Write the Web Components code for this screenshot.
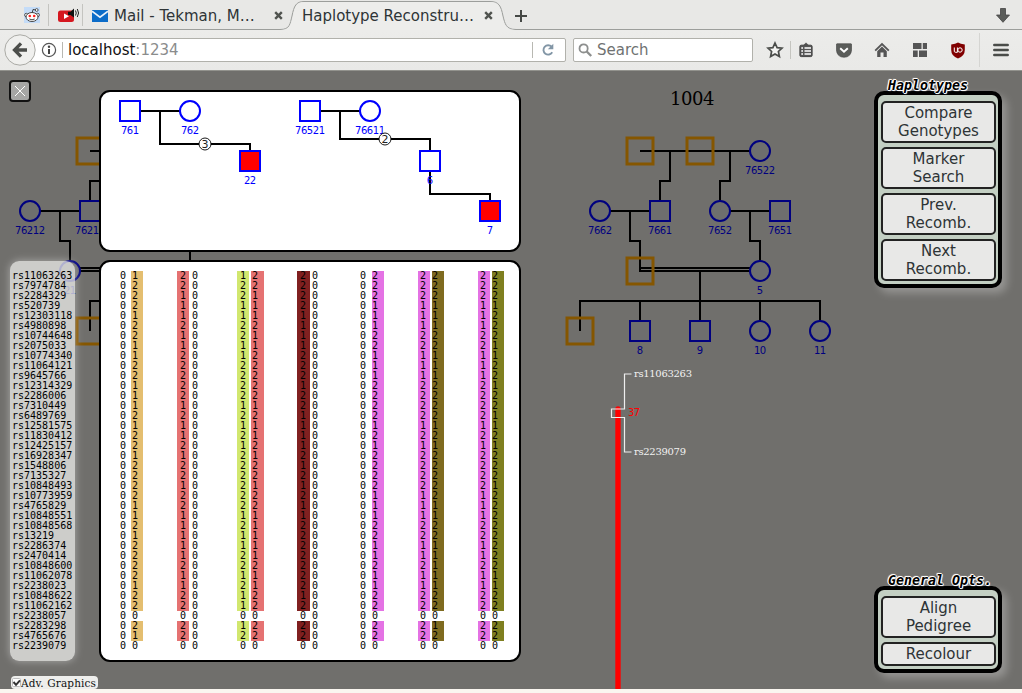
<!DOCTYPE html>
<html lang="en">
<head>
<meta charset="utf-8">
<title>Haplotype Reconstruction</title>
<style>
html,body{margin:0;padding:0}
body{width:1022px;height:693px;overflow:hidden;background:#faf6f0;font-family:"DejaVu Sans",sans-serif}
</style>
</head>
<body>
<haplo-app></haplo-app>
<script>
const define = (name, html, setup) => customElements.define(name, class extends HTMLElement {
  constructor() {
    super();
    this.attachShadow({ mode: 'open' });
  }
  connectedCallback() {
    if (this.shadowRoot.childNodes.length) return;
    this.shadowRoot.innerHTML = typeof html === 'function' ? html(this) : html;
  }
});

/* ---------- browser chrome ---------- */
define('tab-strip', `
<style>
:host{display:flex;position:relative;height:30px;background:#e8e8e6;font:15px "DejaVu Sans",sans-serif;color:#2e3436;align-items:center}
.bg{position:absolute;left:0;top:0}
.row{position:relative;display:flex;align-items:center;width:1022px;height:30px;padding-left:24px;box-sizing:border-box}
.row>*{flex:none}
.sep{width:1px;height:22px;background:#c4c4c0}
span{white-space:pre;line-height:18px;height:18px;padding-top:2px;overflow:visible}
svg{display:block}
</style>
<svg class="bg" width="1022" height="30">
<path d="M0 29.5H280C290 29.5 290 24 292 16C294 6 296 1.5 304 1.5H490C499 1.5 501 6 503 16C505 24 506 29.5 516 29.5H1022" fill="none" stroke="#9c9e9b"/>
<path d="M281 30C290 30 291 24 293 16C295 6 297 2 304 2H490C498 2 500 6 502 16C504 24 506 30 515 30Z" fill="#ededeb"/>
</svg>
<div class="row">
<svg width="16" height="16" viewBox="0 0 16 16"><rect width="16" height="16" fill="#c4dcf8"/><path d="M8 6.5L9 2.5L12 3" fill="none" stroke="#333" stroke-width=".9"/><circle cx="12.7" cy="3" r="1.4" fill="#fff" stroke="#333" stroke-width=".8"/><circle cx="2.3" cy="8" r="1.7" fill="#fff" stroke="#333" stroke-width=".8"/><circle cx="13.7" cy="8" r="1.7" fill="#fff" stroke="#333" stroke-width=".8"/><ellipse cx="8" cy="10" rx="6" ry="4.5" fill="#fff" stroke="#333" stroke-width=".9"/><circle cx="5.8" cy="9" r="1.3" fill="#f22"/><circle cx="10.2" cy="9" r="1.3" fill="#f22"/><path d="M5.3 12Q8 13.6 10.7 12" fill="none" stroke="#333" stroke-width=".9"/></svg>
<div class="sep" style="margin-left:8px"></div>
<svg width="22" height="18" viewBox="0 0 22 18" style="margin-left:9px"><rect x="0" y="4.5" width="16" height="11.5" rx="2.5" fill="#d5171f"/><path d="M6 7.5V13L11 10.2Z" fill="#fff"/><path d="M10 5.8H12.5L16 2.5V11.5L12.5 9H10Z" fill="#111"/><path d="M17.5 4.5Q19 7 17.5 9.5M19.3 3Q21.8 7 19.3 11" fill="none" stroke="#222" stroke-width="1"/></svg>
<div class="sep" style="margin-left:2px"></div>
<svg width="16" height="12" viewBox="0 0 16 12" style="margin-left:9px;margin-top:2px"><rect width="16" height="12" fill="#0b6cc8"/><path d="M0 1.2L8 7.2L16 1.2" fill="none" stroke="#e9f1fa" stroke-width="1.6"/></svg>
<span style="margin-left:6px;width:156px">Mail - Tekman, M…</span>
<svg width="9" height="9" viewBox="0 0 9 9" style="margin-left:3.5px;margin-top:1px"><path d="M1.2 1.2L7.8 7.8M7.8 1.2L1.2 7.8" stroke="#50534f" stroke-width="2.4"/></svg>
<span style="margin-left:19.5px;width:172px">Haplotype Reconstru…</span>
<svg width="9" height="9" viewBox="0 0 9 9" style="margin-left:9.5px;margin-top:1px"><path d="M1.2 1.2L7.8 7.8M7.8 1.2L1.2 7.8" stroke="#50534f" stroke-width="2.4"/></svg>
<svg width="12" height="12" viewBox="0 0 12 12" style="margin-left:22.5px;margin-top:2px"><path d="M6 0V12M0 6H12" stroke="#454845" stroke-width="2"/></svg>
<svg width="14" height="15" viewBox="0 0 14 15" style="margin-left:469px"><path d="M4.5 .5H9.5V7H13.5L7 14.3L.5 7H4.5Z" fill="#5b5d5a" stroke="#444" stroke-width=".8"/></svg>
</div>`);

define('nav-bar', `
<style>
:host{display:flex;align-items:center;height:40px;background:linear-gradient(#ececea,#e9e9e7);border-bottom:1px solid #92928d;font:15px "DejaVu Sans",sans-serif;position:relative}
:host>*{flex:none}
svg{display:block}
.field{display:flex;align-items:center;height:24px;box-sizing:border-box;border:1px solid #b1b1ab;border-radius:2px;background:#fff}
.url{width:546px;margin-left:20px;padding-left:20px}
.search{width:180px;margin-left:7px;padding-left:4px;color:#6f7272}
.back{position:absolute;left:4px;top:4px}
.sep{width:1px;background:#b8b8b2;height:16px}
.g{color:#8a8c8c}
span{line-height:18px;position:relative;top:-.5px}
</style>
<div class="field url">
<svg width="16" height="16" viewBox="0 0 16 16"><circle cx="8" cy="8" r="6.6" fill="none" stroke="#555" stroke-width="1.2"/><path d="M8 7V12" stroke="#444" stroke-width="2"/><circle cx="8" cy="4.8" r="1.2" fill="#444"/></svg>
<div class="sep" style="margin-left:5px"></div><span style="margin-left:5px;width:464px;color:#111">localhost<span class="g" style="top:0">:1234</span></span><div class="sep"></div>
<svg width="14" height="14" viewBox="0 0 14 14" style="margin-left:8px"><path d="M10.6 3.7A4.7 4.7 0 1 0 11.2 9.3" fill="none" stroke="#8296a6" stroke-width="1.9"/><path d="M12.3 .8V6.3H6.8Z" fill="#8296a6"/></svg>
</div>
<svg class="back" width="32" height="32" viewBox="0 0 32 32"><circle cx="16" cy="16" r="15.2" fill="#f0f0ee" stroke="#aaaaa5"/><path d="M17 9.3L10.5 16L17 22.7M11 16H23" fill="none" stroke="#4c4e4b" stroke-width="3.3"/></svg>
<div class="field search"><svg width="15" height="15" viewBox="0 0 15 15"><circle cx="5.6" cy="5.4" r="4.1" fill="none" stroke="#8d8f8e" stroke-width="1.8"/><path d="M8.7 8.5L13.2 13" stroke="#8d8f8e" stroke-width="2.4"/></svg><span style="margin-left:4px">Search</span></div>
<svg width="18" height="18" viewBox="0 0 18 18" style="margin-left:13px"><path d="M9 2L11.1 6.6L16 7.1L12.4 10.5L13.4 15.6L9 13L4.6 15.6L5.6 10.5L2 7.1L6.9 6.6Z" fill="#f4f4f2" stroke="#4b4d4a" stroke-width="1.7"/></svg>
<div class="sep" style="margin-left:6px;height:18px;background:#c5c5c0"></div>
<svg width="14" height="16" viewBox="0 0 14 16" style="margin-left:8px"><path d="M4 3.5L7 .5L10 3.5Z" fill="#555"/><rect x=".9" y="3.2" width="12.2" height="11.4" rx="1.3" fill="#555" stroke="#444"/><path d="M2.3 6H4M5.5 6H12M2.3 9H4M5.5 9H12M2.3 12H4M5.5 12H12" stroke="#fff" stroke-width="1.5"/></svg>
<svg width="16" height="15" viewBox="0 0 16 15" style="margin-left:23px"><path d="M1 .7H15Q15.7 .7 15.7 2V6.5Q15 14.3 8 14.3Q1 14.3 .3 6.5V2Q.3 .7 1 .7Z" fill="#5b5d5a" stroke="#444" stroke-width=".6"/><path d="M4.2 5.2L8 8.8L11.8 5.2" fill="none" stroke="#fff" stroke-width="1.9"/></svg>
<svg width="16" height="16" viewBox="0 0 16 16" style="margin-left:22px"><path d="M1.2 8.7L8 2L14.8 8.7" fill="none" stroke="#555" stroke-width="1.8"/><path d="M3.2 9.2L8 4.6L12.8 9.2V15H9.5V10.5H6.5V15H3.2Z" fill="#555"/></svg>
<svg width="14" height="14" viewBox="0 0 14 14" style="margin-left:23px"><path d="M0 0H8.5V6H0ZM9.8 0H14V6H9.8ZM0 7.4H4.7V14H0ZM6 7.4H14V14H6Z" fill="#555"/></svg>
<svg width="14" height="17" viewBox="0 0 14 17" style="margin-left:24px"><path d="M7 .5Q9.5 2.2 13.8 2.5V8Q13.8 14 7 16.5Q.2 14 .2 8V2.5Q4.5 2.2 7 .5Z" fill="#800000"/><path d="M3.3 5.5V9.3Q3.3 10.3 4.8 10.3H6.4V5.5" fill="none" stroke="#fff"/><circle cx="9" cy="8" r="2.2" fill="none" stroke="#fff"/></svg>
<div class="sep" style="margin-left:14px;height:34px;background:#d5d5d2"></div>
<svg width="16" height="14" viewBox="0 0 16 14" style="margin-left:13px"><path d="M1.3 2H14.7M1.3 7H14.7M1.3 12H14.7" stroke="#4a4c49" stroke-width="2.5" stroke-linecap="round"/></svg>
`);

/* ---------- pedigree drawing helpers ---------- */
const label = (x, y, t) => `<text x="${x}" y="${y + 23}" textLength="${t.length * 6}" text-anchor="middle">${t}</text>`;
const male = (x, y, t = '', c = '') => `<rect x="${x - 10}" y="${y - 10}" width="20" height="20" class="n ${c}"/>${t && label(x, y, t)}`;
const female = (x, y, t) => `<circle cx="${x}" cy="${y}" r="10" class="n"/>${label(x, y, t)}`;
const chosen = (x, y) => `<rect x="${x - 13}" y="${y - 13}" width="26" height="26" class="o"/>`;

define('pedigree-canvas', () => `
<style>
:host{display:block}
svg{display:block}
.n{fill:#6e6e6e;stroke:#000080;stroke-width:2}
.o{fill:none;stroke:#855600;stroke-width:3}
.l{fill:none;stroke:#000;stroke-width:2}
text{font:10px "DejaVu Sans",sans-serif;fill:#000080}
.s{font-family:"DejaVu Serif",serif;fill:#f2f2f2}
</style>
<svg width="1022" height="618" viewBox="0 71 1022 618">
<text x="670" y="105" textLength="44.5" style="font:18px 'DejaVu Serif',serif;fill:#000">1004</text>
<path class="l" d="M40 211H80M60 211V241H70V262M90 201V181H110M90 151H110M80 268H110M80 271H110M110 301H90V331M190 240V270"/>
${chosen(90, 151)}${female(30, 211, '76212')}${male(90, 211, '76211')}${female(70, 271, '21')}${chosen(90, 331)}
<path class="l" d="M640 151H750M670 151V181H660V201M730 151V181H720V201M610 211H650M630 211V241H640V272M730 211H770M750 211V241H760V261M640 268H750M640 271H750M700 271V321M580 331V301H820V321M640 301V321M760 301V321"/>
${chosen(640, 151)}${chosen(700, 151)}${female(760, 151, '76522')}
${female(600, 211, '7662')}${male(660, 211, '7661')}${female(720, 211, '7652')}${male(780, 211, '7651')}
${chosen(640, 271)}${female(760, 271, '5')}
${chosen(580, 331)}${male(640, 331, '8')}${male(700, 331, '9')}${female(760, 331, '10')}${female(820, 331, '11')}
<path d="M618 409V700" stroke="#f00" stroke-width="5.4" stroke-linecap="round"/>
<path d="M631.5 374H624.5V409H611.5V417.5H624.5V452H631.5" fill="none" stroke="#eee" stroke-width="1.2"/>
<text x="628" y="416" textLength="12" style="fill:#f00">37</text>
<text class="s" x="634" y="377" textLength="58">rs11063263</text>
<text class="s" x="634" y="455" textLength="52">rs2239079</text>
</svg>`);

define('selection-view', () => `
<style>
:host{display:block;box-sizing:border-box;width:422px;height:162px;border:2px solid #000;border-radius:11px;background:#fff;overflow:hidden}
svg{display:block}
.n{fill:#fff;stroke:#00f;stroke-width:2}
.n.a{fill:#f00}
.l{fill:none;stroke:#000;stroke-width:2}
text{font:10px "DejaVu Sans",sans-serif;fill:#00f}
.c{fill:#fff;stroke:#000;stroke-width:.9}
.k{fill:#222;font-size:11px}
</style>
<svg width="418" height="158" viewBox="101 92 418 158">
<path class="l" d="M140 111H180M160 111V144H250V151M320 111H360M340 111V139H430V151M430 171V194H490V201"/>
${male(130, 111, '761')}${female(190, 111, '762')}${male(250, 161, '22', 'a')}
${male(310, 111, '76521')}${female(370, 111, '76611')}${male(430, 161, '6')}${male(490, 211, '7', 'a')}
<circle class="c" cx="205" cy="144" r="6"/><text class="k" x="205" y="148" text-anchor="middle">3</text>
<circle class="c" cx="385" cy="139" r="6"/><text class="k" x="385" y="143" text-anchor="middle">2</text>
</svg>`);

/* ---------- haplotypes ---------- */
const Z = '0'.repeat(38);
const RED = '22111211222221211212' + '212211111211220220';
const PINK = '22211122111222212122' + '221112211211220220';
const PEOPLE = [
  [[Z], ['12221221122111212212' + '222112122221220210', '#e4be70', 0]],
  [[RED, '#e57272', 0], [Z]],
  [['12211221122221212122' + '222212112212110120', '#d1e76f', .2], [RED, '#e57272', .4]],
  [['22221111222122111121' + '212112222222120220', '#802020', .3], [Z]],
  [[Z], [PINK, '#e472e4', .6]],
  [[PINK, '#e472e4', 1], ['22211122111222212122' + '222112211111220120', '#7f6b20', 1]],
  [[PINK, '#e472e4', 1], ['22212221122122112122' + '212222222211220220', '#7f7f20', 1]]
];
define('allele-strand', el => {
  const d = +el.getAttribute('shift') || 0, base = el.hasAttribute('second') ? 1 : 3;
  return `
<style>
:host{display:block;width:12.3px}
div{height:10px;line-height:10px;padding-left:${base - d}px;white-space:pre;box-sizing:border-box}
.f{background:${el.getAttribute('color') || 'none'}}
</style>` + [...el.getAttribute('alleles')].map(a => `<div${a !== '0' ? ' class="f"' : ''}>${a}</div>`).join('');
});
define('haplotype-table', () => `
<style>
:host{display:flex;box-sizing:border-box;width:422px;height:402px;border:2px solid #000;border-radius:11px;background:#fff;padding-top:9px;padding-left:16px;font:10px "DejaVu Sans Mono",monospace;color:#000}
.p{flex:none;width:60px;display:grid;grid-template-columns:14px 14px;align-items:start;justify-content:start}
</style>` + PEOPLE.map(p => `<div class="p">` + p.map((s, i) =>
  `<allele-strand ${i ? 'second' : ''} alleles="${s[0]}" color="${s[1] || ''}" shift="${s[2] || 0}" style="margin-left:${s[2] || 0}px"></allele-strand>`).join('') + `</div>`).join(''));

define('marker-list', () => `
<style>
:host{display:block;box-sizing:border-box;width:65px;height:400px;padding:10px 0 0 2px;border-radius:9px;background:rgba(236,236,234,.75);box-shadow:0 0 9px rgba(255,255,255,.42);font:10px/10px "DejaVu Sans Mono",monospace;color:#000}
div{height:10px;white-space:pre}
</style>` + 'rs11063263 rs7974784 rs2284329 rs520739 rs12303118 rs4980898 rs10744648 rs2075033 rs10774340 rs11064121 rs9645766 rs12314329 rs2286006 rs7310449 rs6489769 rs12581575 rs11830412 rs12425157 rs16928347 rs1548806 rs7135327 rs10848493 rs10773959 rs4765829 rs10848551 rs10848568 rs13219 rs2286374 rs2470414 rs10848600 rs11062078 rs2238023 rs10848622 rs11062162 rs2238057 rs2283298 rs4765676 rs2239079'.split(' ').map(m => `<div>${m}</div>`).join(''));

/* ---------- controls ---------- */
define('close-button', `
<style>:host{display:block;box-sizing:border-box;width:22px;height:22px;border:2px solid #111;border-radius:4px;background:#a6a6a5}svg{display:block}</style>
<svg width="18" height="18"><path d="M4 4L14 14M14 4L4 14" stroke="#fff" stroke-width="1"/></svg>`);

define('graphics-toggle', `
<style>
:host{display:flex;align-items:center;box-sizing:border-box;width:87px;height:13px;padding-left:1px;background:#eeeeec;border-radius:4px;font:10.5px/13px "DejaVu Serif",serif;color:#111;white-space:pre}
span{letter-spacing:.12px;position:relative;top:.5px}
</style>
<svg width="9" height="9" viewBox="0 0 9 9"><rect x=".5" y=".5" width="8" height="8" rx="1" fill="#fff" stroke="#bbb"/><path d="M1.5 4L4 6.8L8 2.3" fill="none" stroke="#333" stroke-width="2"/></svg><span>Adv. Graphics</span>`);

define('action-button', `
<style>
:host{display:flex;align-items:center;justify-content:center;box-sizing:border-box;width:115px;height:42px;border:2px solid #222;border-radius:5px;background:#e8e8e7;color:#2e3436;font:15px/18px "DejaVu Sans",sans-serif;text-align:center}
:host([single]){height:24px}
</style><div><slot></slot></div>`);

define('action-panel', el => `
<style>
:host{display:block;position:relative;box-sizing:border-box;width:128px;border:4px solid #000;border-radius:10px;background:#c3cfc3;padding:6px 2px 3px 3px;box-shadow:5px 5px 9px rgba(255,255,255,.27)}
.b{display:flex;flex-direction:column;gap:4px}
h2{position:absolute;left:10px;top:-17px;margin:0;font:italic bold 13.3px/16px "DejaVu Sans Mono",monospace;color:#000;white-space:pre;text-shadow:1px 0 #fff,-1px 0 #fff,0 1px #fff,0 -1px #fff,1px 1px 1px #fff,-1px -1px 1px #fff}
</style><h2>${el.getAttribute('heading')}</h2><div class="b"><slot></slot></div>`);

define('haplo-app', `
<style>
:host{display:flex;flex-direction:column;width:1022px;height:693px}
.stage{position:relative;height:618px;background:#706f6c;overflow:hidden}
pedigree-canvas{position:absolute;left:0;top:0}
.layout{position:relative;display:grid;grid-template-columns:99px 422px 1fr 128px;padding-right:20px;height:618px}
.left{display:flex;flex-direction:column;align-items:flex-start;padding:9px 0 0 9px}
.left marker-list{margin:159px 0 0 1px}
.left graphics-toggle{margin:15px 0 0 2px}
.mid{display:flex;flex-direction:column;gap:8px;padding-top:19px}
.right{grid-column:4;display:flex;flex-direction:column;justify-content:space-between;padding:20px 0 16px}
</style>
<tab-strip></tab-strip>
<nav-bar></nav-bar>
<div class="stage">
<pedigree-canvas></pedigree-canvas>
<div class="layout">
<div class="left"><close-button></close-button><marker-list></marker-list><graphics-toggle></graphics-toggle></div>
<div class="mid"><selection-view></selection-view><haplotype-table></haplotype-table></div>
<div class="right">
<action-panel heading="Haplotypes"><action-button>Compare<br>Genotypes</action-button><action-button>Marker<br>Search</action-button><action-button>Prev.<br>Recomb.</action-button><action-button>Next<br>Recomb.</action-button></action-panel>
<action-panel heading="General Opts."><action-button>Align<br>Pedigree</action-button><action-button single>Recolour</action-button></action-panel>
</div>
</div>
</div>`);
</script>
</body>
</html>
